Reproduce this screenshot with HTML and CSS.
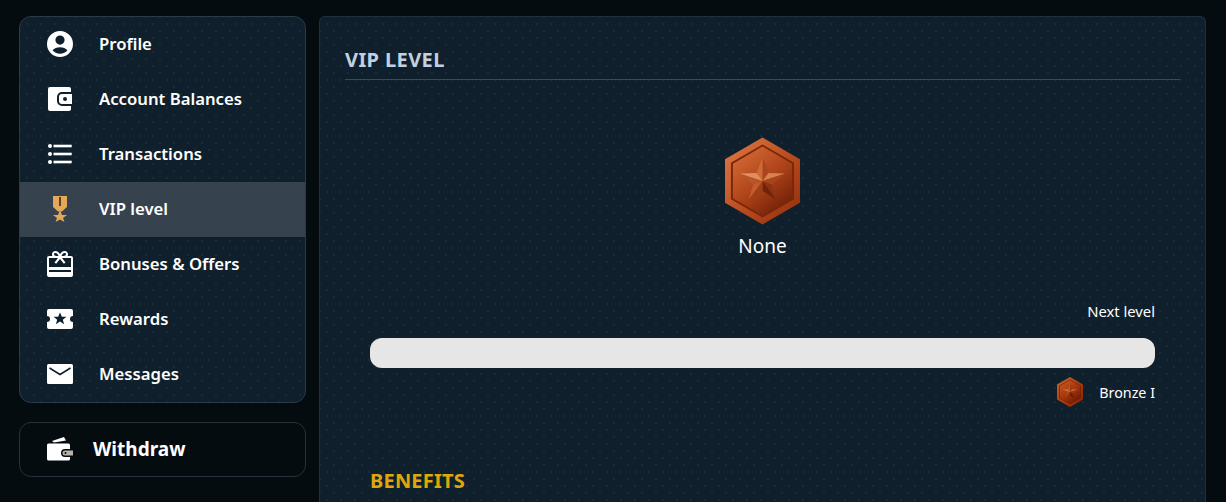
FILE: index.html
```html
<!DOCTYPE html>
<html lang="en">
<head>
    <meta charset="UTF-8">
    <title>VIP level</title>
    <link rel="stylesheet" href="styles.css">
</head>
<body>
    <svg class="defs" width="0" height="0" aria-hidden="true">
        <defs>
            <linearGradient id="rim" x1="0" y1="0" x2="1" y2="1">
                <stop offset="0" stop-color="#e07c45"/>
                <stop offset="0.55" stop-color="#b84a1e"/>
                <stop offset="1" stop-color="#8f2c0c"/>
            </linearGradient>
            <linearGradient id="face" x1="0.15" y1="0" x2="0.85" y2="1">
                <stop offset="0" stop-color="#d56c36"/>
                <stop offset="0.5" stop-color="#b0441a"/>
                <stop offset="1" stop-color="#6a1c05"/>
            </linearGradient>
            <symbol id="medal" viewBox="0 0 76 88">
                <polygon points="38,0 76,22 76,66 38,88 0,66 0,22" fill="url(#rim)"/>
                <polygon points="38,7 70,25.500 70,62.500 38,81 6,62.500 6,25.500" fill="#792709"/>
                <polygon points="38,9 68,26.500 68,61.500 38,79 8,61.500 8,26.500" fill="url(#face)"/>
                <polygon points="38,20 44,36 38,44" fill="#a8451c"/>
                <polygon points="38,20 32,36 38,44" fill="#cf6a38"/>
                <polygon points="61,36.500 44,36 38,44" fill="#d9824f"/>
                <polygon points="61,36.500 47.500,47.500 38,44" fill="#a8451c"/>
                <polygon points="52,63 47.500,47.500 38,44" fill="#8a3412"/>
                <polygon points="52,63 38,54 38,44" fill="#6f2409"/>
                <polygon points="24,63 38,54 38,44" fill="#9c3e18"/>
                <polygon points="24,63 28.500,47.500 38,44" fill="#c25d2d"/>
                <polygon points="15,36.500 28.500,47.500 38,44" fill="#b8542a"/>
                <polygon points="15,36.500 32,36 38,44" fill="#e08f5e"/>
            </symbol>
        </defs>
    </svg>

    <div class="page">
        <aside class="sidebar">
            <nav class="menu">
                <a class="menu-item">
                    <svg class="icon" viewBox="0 0 26 26"><path fill="#fff" fill-rule="evenodd" d="M13 0a13 13 0 1 1 0 26a13 13 0 0 1 0-26zM13 4.500a4.600 4.600 0 1 0 0 9.200a4.600 4.600 0 0 0 0-9.200zM5.600 19.200c1.600 2.200 4.400 3.600 7.400 3.600s5.800-1.400 7.400-3.600c-1.600-1.900-4.400-3-7.400-3s-5.800 1.100-7.400 3z"/></svg>
                    <span>Profile</span>
                </a>
                <a class="menu-item">
                    <svg class="icon" viewBox="0 0 26 26"><path fill="#fff" d="M3 1h19a2 2 0 0 1 2 2v3h-9a5 5 0 0 0-5 5v4a5 5 0 0 0 5 5h9v3a2 2 0 0 1-2 2H3a2 2 0 0 1-2-2V3a2 2 0 0 1 2-2z"/><path fill="#fff" fill-rule="evenodd" d="M15 8h10v10H15a3 3 0 0 1-3-3v-4a3 3 0 0 1 3-3zM18 11a2 2 0 1 0 0 4a2 2 0 0 0 0-4z"/></svg>
                    <span>Account Balances</span>
                </a>
                <a class="menu-item">
                    <svg class="icon" viewBox="0 0 26 26"><g fill="#fff"><circle cx="3" cy="5" r="2"/><circle cx="3" cy="13" r="2"/><circle cx="3" cy="21" r="2"/><rect x="6.500" y="3.700" width="18.200" height="2.600"/><rect x="6.500" y="11.700" width="18.200" height="2.600"/><rect x="6.500" y="19.700" width="18.200" height="2.600"/></g></svg>
                    <span>Transactions</span>
                </a>
                <a class="menu-item active">
                    <svg class="icon" viewBox="0 0 26 26"><path fill="#e3a858" d="M6 0h14v11l-5 4.500h-4L6 11z"/><rect x="12.200" y="1" width="1.600" height="9" fill="#3a2a18"/><polygon fill="#e3a858" points="13,14 15,19 20,19 16,22 17.500,26 13,23.500 8.500,26 10,22 6,19 11,19"/></svg>
                    <span>VIP level</span>
                </a>
                <a class="menu-item">
                    <svg class="icon" viewBox="0 0 26 26"><path fill="#fff" fill-rule="evenodd" d="M8.500 0c2 0 3.600 1.400 4.500 3.200C13.900 1.400 15.500 0 17.500 0c2.200 0 3.500 1.500 3.500 3.200c0 .6-.1 1.200-.4 1.800H24a2 2 0 0 1 2 2v17a2 2 0 0 1-2 2H2a2 2 0 0 1-2-2V7a2 2 0 0 1 2-2h3.400C5.100 4.400 5 3.800 5 3.200C5 1.500 6.300 0 8.500 0zM8.500 2C7.600 2 7 2.500 7 3.300C7 4.300 8 5 9.500 5h2C11 3.400 9.900 2 8.500 2zM17.500 2c-1.400 0-2.500 1.400-3 3h2c1.500 0 2.500-.7 2.500-1.700C19 2.500 18.400 2 17.500 2zM2 7v9h22V7h-9l3.500 4.500l-1.600 1.200L13 8l-3.900 4.700l-1.600-1.200L11 7zM2 19v2h22v-2z"/></svg>
                    <span>Bonuses &amp; Offers</span>
                </a>
                <a class="menu-item">
                    <svg class="icon" viewBox="0 0 26 26"><path fill="#fff" fill-rule="evenodd" d="M2 3h22a2 2 0 0 1 2 2v5a3 3 0 0 0 0 6v5a2 2 0 0 1-2 2H2a2 2 0 0 1-2-2v-5a3 3 0 0 0 0-6V5a2 2 0 0 1 2-2zM13 6.500l-1.800 4.200H6.500l3.700 3-1.300 4.600l4.100-2.700l4.100 2.700l-1.300-4.600l3.700-3h-4.700z"/></svg>
                    <span>Rewards</span>
                </a>
                <a class="menu-item">
                    <svg class="icon" viewBox="0 0 26 26"><rect x="0" y="3" width="26" height="20" rx="1.500" fill="#fff"/><polyline points="2.500,7 13,13.500 23.500,7" fill="none" stroke="#0f1f2c" stroke-width="1.500"/></svg>
                    <span>Messages</span>
                </a>
            </nav>
            <a class="withdraw">
                <svg class="icon" viewBox="0 0 26 26"><path fill="#fff" d="M5 5l12-4l2 3.400L7 6.600z"/><path fill="#fff" d="M1.500 7.500h20a1.500 1.500 0 0 1 1.500 1.500v4h-5a4 4 0 0 0 0 8h5v2a1.500 1.500 0 0 1-1.500 1.500h-20A1.500 1.500 0 0 1 0 23V9a1.500 1.500 0 0 1 1.500-1.500z"/><path fill="#b9b3a6" fill-rule="evenodd" d="M18 14.500h8v5h-8a2.500 2.500 0 0 1 0-5zM18.500 16a1 1 0 1 0 0 2a1 1 0 0 0 0-2z"/></svg>
                <span>Withdraw</span>
            </a>
        </aside>

        <main class="panel">
            <h2 class="panel-title">VIP LEVEL</h2>
            <div class="current">
                <svg class="medal-big"><use href="#medal"/></svg>
                <div class="current-name">None</div>
            </div>
            <div class="progress">
                <div class="progress-label">Next level</div>
                <div class="progress-bar"></div>
                <div class="next-rank">
                    <svg class="medal-small"><use href="#medal"/></svg>
                    <span>Bronze I</span>
                </div>
            </div>
            <h3 class="benefits">BENEFITS</h3>
        </main>
    </div>
</body>
</html>
```

FILE: styles.css
```css
* {
    box-sizing: border-box;
}
body {
    margin: 0;
    height: 502px;
    overflow: hidden;
    background: #050c10;
    color: #fff;
    font-family: "Noto Sans", sans-serif;
}
.defs {
    display: block;
    height: 0;
}
.page {
    display: flex;
    gap: 13px;
    height: 502px;
    padding: 16px 19px 0;
}
.sidebar {
    width: 287px;
    flex: none;
}
.menu {
    height: 387px;
    border: 1px solid #2a3a47;
    border-radius: 12px;
    background-color: #0f202c;
    background-image: radial-gradient(#182b39 0.7px, transparent 1px), radial-gradient(#182b39 0.7px, transparent 1px);
    background-size: 14px 14px;
    background-position: 0 0, 7px 7px;
    overflow: hidden;
}
.menu-item {
    display: flex;
    align-items: center;
    height: 55px;
    padding: 0 0 2px 27px;
    gap: 26px;
    font-size: 16.700px;
    font-weight: 600;
}
.menu-item.active {
    background: #36434e;
}
.icon {
    width: 26px;
    height: 26px;
    flex: none;
}
.withdraw {
    display: flex;
    align-items: center;
    height: 55px;
    margin-top: 19px;
    padding: 0 0 2px 27px;
    gap: 20px;
    border: 1px solid #25313b;
    border-radius: 12px;
    font-size: 19px;
    font-weight: 700;
}
.panel {
    width: 887px;
    padding: 0 25px;
    border: 1px solid #1f303d;
    border-bottom: 0;
    border-radius: 6px 6px 0 0;
    background-color: #0f202c;
    background-image: radial-gradient(#182b39 0.7px, transparent 1px), radial-gradient(#182b39 0.7px, transparent 1px);
    background-size: 14px 14px;
    background-position: 0 0, 7px 7px;
}
.panel-title {
    margin: 29px 0 0;
    height: 34px;
    border-bottom: 1px solid #3a4955;
    color: #c3d0e0;
    font-size: 20px;
    font-weight: 700;
    letter-spacing: 0.4px;
    line-height: 27px;
}
.current {
    display: flex;
    flex-direction: column;
    align-items: center;
    margin-top: 57px;
}
.medal-big {
    width: 75px;
    height: 88px;
}
.current-name {
    margin-top: 8px;
    font-size: 19px;
    line-height: 26px;
}
.progress {
    margin: 42px 25px 0;
}
.progress-label {
    text-align: right;
    font-size: 14.800px;
    line-height: 20px;
}
.progress-bar {
    height: 30px;
    margin-top: 17px;
    border-radius: 12px;
    background: #e6e6e6;
}
.next-rank {
    display: flex;
    justify-content: flex-end;
    align-items: center;
    gap: 16px;
    margin-top: 9px;
    font-size: 14.300px;
}
.medal-small {
    width: 26px;
    height: 30px;
    filter: brightness(0.85) saturate(1.2);
}
.benefits {
    margin: 60px 25px 0;
    color: #e0a70a;
    font-size: 20px;
    font-weight: 700;
    letter-spacing: 0.2px;
}
```
